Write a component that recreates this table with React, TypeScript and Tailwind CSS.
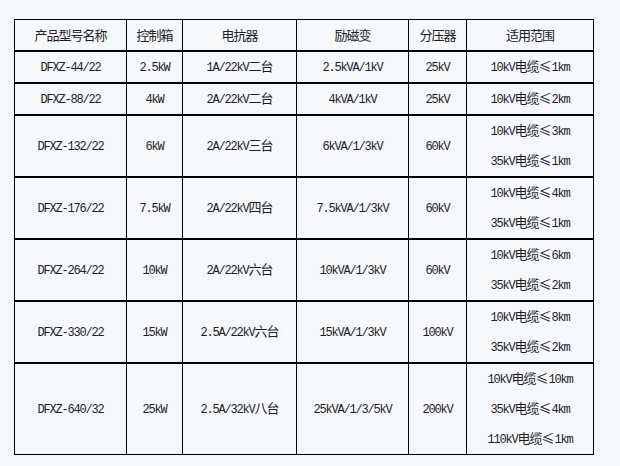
const header = ['产品型号名称', '控制箱', '电抗器', '励磁变', '分压器', '适用范围'];

const rows: { cells: string[]; range: string[]; h: string }[] = [
  { cells: ['DFXZ-44/22', '2.5kW', '1A/22kV二台', '2.5kVA/1kV', '25kV'], range: ['10kV电缆≤1km'], h: 'h-[32px]' },
  { cells: ['DFXZ-88/22', '4kW', '2A/22kV二台', '4kVA/1kV', '25kV'], range: ['10kV电缆≤2km'], h: 'h-[32px]' },
  { cells: ['DFXZ-132/22', '6kW', '2A/22kV三台', '6kVA/1/3kV', '60kV'], range: ['10kV电缆≤3km', '35kV电缆≤1km'], h: 'h-[62px]' },
  { cells: ['DFXZ-176/22', '7.5kW', '2A/22kV四台', '7.5kVA/1/3kV', '60kV'], range: ['10kV电缆≤4km', '35kV电缆≤1km'], h: 'h-[62px]' },
  { cells: ['DFXZ-264/22', '10kW', '2A/22kV六台', '10kVA/1/3kV', '60kV'], range: ['10kV电缆≤6km', '35kV电缆≤2km'], h: 'h-[62px]' },
  { cells: ['DFXZ-330/22', '15kW', '2.5A/22kV六台', '15kVA/1/3kV', '100kV'], range: ['10kV电缆≤8km', '35kV电缆≤2km'], h: 'h-[62px]' },
  { cells: ['DFXZ-640/32', '25kW', '2.5A/32kV八台', '25kVA/1/3/5kV', '200kV'], range: ['10kV电缆≤10km', '35kV电缆≤4km', '110kV电缆≤1km'], h: 'h-[91px]' },
];

const widths = ['w-[113px]', 'w-[56px]', 'w-[114px]', 'w-[112px]', 'w-[58px]', 'w-[127px]'];

// latin runs in a narrow mono, the rest in the CJK face
function Mixed({ text }: { text: string }) {
  const parts = text.match(/[\x00-\x7F]+|≤|[^\x00-\x7F≤]+/g) || [];
  return (
    <div className="flex h-[30px] items-center justify-center whitespace-nowrap">
      <span className="leading-[14px]">
        {parts.map((p, i) =>
          p === '≤' ? (
            <span key={i} className="inline-block w-[13px] text-center text-[13px] font-['Noto_Sans_CJK_SC',sans-serif]">≤</span>
          ) : /^[\x00-\x7F]+$/.test(p) ? (
            <span key={i} className="font-['Liberation_Mono',monospace] tracking-[-1.2px]">{p}</span>
          ) : (
            <span key={i} className="text-[13px] tracking-[-1px] font-['Noto_Sans_CJK_SC',sans-serif]">{p}</span>
          )
        )}
      </span>
    </div>
  );
}

export default function App() {
  return (
    <div className="w-[620px] h-[466px] bg-[#f4f7fb] pl-[14px] pt-[19px] text-[#1e1e1e]">
      <table className="table-fixed border-separate border-spacing-0 w-[580px]">
        <thead>
          <tr className="h-[33px]">
            {header.map((t, i) => (
              <th
                key={t}
                className={`${widths[i]} p-0 font-normal text-center text-[13px] leading-[16px] tracking-[-1px] font-['Noto_Sans_CJK_SC',sans-serif] border-t border-r border-b-2 border-black ${i === 0 ? 'border-l' : ''}`}
              >
                {t}
              </th>
            ))}
          </tr>
        </thead>
        <tbody>
          {rows.map((r, ri) => {
            const last = ri === rows.length - 1;
            const bb = last ? 'border-b' : 'border-b-2';
            return (
              <tr key={ri} className={r.h}>
                {r.cells.map((c, ci) => (
                  <td
                    key={ci}
                    className={`p-0 text-center align-middle text-[12px] border-r ${bb} border-black ${ci === 0 ? 'border-l' : ''}`}
                  >
                    <Mixed text={c} />
                  </td>
                ))}
                <td className={`p-0 text-center align-middle text-[12px] border-r ${bb} border-black`}>
                  {r.range.map((l) => (
                    <Mixed key={l} text={l} />
                  ))}
                </td>
              </tr>
            );
          })}
        </tbody>
      </table>
    </div>
  );
}
